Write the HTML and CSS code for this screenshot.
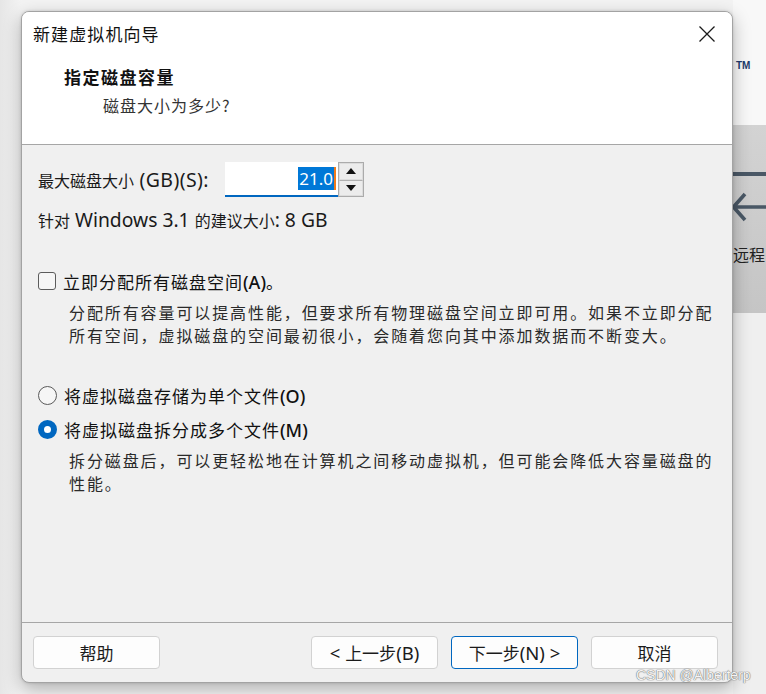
FILE: index.html
```html
<!DOCTYPE html>
<html lang="zh-CN">
<head>
<meta charset="utf-8">
<title>新建虚拟机向导</title>
<link rel="stylesheet" href="styles.css">
</head>
<body>
<div class="desk">
  <div class="window">
    <div class="titlebar">
      <span class="title">新建虚拟机向导</span>
      <svg class="close" width="18" height="18" viewBox="0 0 18 18"><path d="M1.5 1.5 L16.5 16.5 M16.5 1.5 L1.5 16.5" stroke="#1a1a1a" stroke-width="1.3" fill="none"/></svg>
    </div>
    <div class="header">
      <div class="h-title">指定磁盘容量</div>
      <div class="h-sub">磁盘大小为多少?</div>
    </div>
    <div class="content">
      <div class="size-row">
        <span class="lbl">最大磁盘大小<span class="en"> (GB)(S):</span></span>
        <div class="spin">
          <div class="field"><span class="sel">21.0</span><span class="caret"></span></div>
          <div class="spin-btns">
            <div class="spin-btn"><svg width="10" height="6" viewBox="0 0 10 6"><path d="M0 6 L5 0 L10 6 Z" fill="#111"/></svg></div>
            <div class="spin-btn"><svg width="10" height="6" viewBox="0 0 10 6"><path d="M0 0 L5 6 L10 0 Z" fill="#111"/></svg></div>
          </div>
        </div>
      </div>
      <div class="hint">针对<span class="en"> Windows 3.1 </span>的建议大小<span class="en">: 8 GB</span></div>

      <div class="opt check-row">
        <span class="box"></span>
        <span class="opt-lbl">立即分配所有磁盘空间<span class="en b">(A)</span>。</span>
      </div>
      <p class="desc">分配所有容量可以提高性能，但要求所有物理磁盘空间立即可用。如果不立即分配所有空间，虚拟磁盘的空间最初很小，会随着您向其中添加数据而不断变大。</p>

      <div class="opt radio-row first">
        <span class="radio"></span>
        <span class="opt-lbl">将虚拟磁盘存储为单个文件<span class="en b">(O)</span></span>
      </div>
      <div class="opt radio-row">
        <span class="radio on"></span>
        <span class="opt-lbl">将虚拟磁盘拆分成多个文件<span class="en b">(M)</span></span>
      </div>
      <p class="desc">拆分磁盘后，可以更轻松地在计算机之间移动虚拟机，但可能会降低大容量磁盘的性能。</p>
    </div>
    <div class="footer">
      <button class="btn">帮助</button>
      <div class="btn-group">
        <button class="btn"><span class="en">&lt;&nbsp;</span>上一步<span class="en">(B)</span></button>
        <button class="btn primary">下一步<span class="en">(N)&nbsp;&gt;</span></button>
        <button class="btn">取消</button>
      </div>
    </div>
  </div>
  <div class="side">
    <div class="side-top"><span class="tm">TM</span></div>
    <div class="side-panel">
      <div class="side-bar"></div>
      <svg class="side-arrow" width="34" height="30" viewBox="0 0 34 30"><path d="M13 2 L1.5 15 L13 28 M1.5 15 H34" stroke="#4a5866" stroke-width="3.6" fill="none"/></svg>
      <span class="side-text">远程</span>
    </div>
    <div class="side-bottom"></div>
  </div>
</div>
<div class="watermark">CSDN @Alberterp</div>
</body>
</html>
```

FILE: styles.css
```css
* { box-sizing: border-box; }
html, body { margin: 0; padding: 0; }
body {
  width: 766px;
  height: 694px;
  overflow: hidden;
  position: relative;
  background: #ededed;
  font-family: "Noto Sans CJK SC", "Noto Sans", sans-serif;
  color: #1a1a1a;
}
.en { font-family: "Noto Sans", "Noto Sans CJK SC", sans-serif; }
.b { font-weight: 500; }

.desk {
  display: flex;
  height: 694px;
  padding-left: 21px;
  background: linear-gradient(90deg, #e6e6e6 0, #f3f3f3 21px);
}

.window {
  position: relative;
  z-index: 1;
  width: 712px;
  height: 672px;
  margin-top: 11px;
  border: 1px solid #a3a3a3;
  border-radius: 8px;
  background: #f0f0f0;
  box-shadow: 0 6px 18px rgba(0,0,0,0.28), 0 0 3px rgba(0,0,0,0.15);
  display: flex;
  flex-direction: column;
  overflow: hidden;
  flex: none;
}

.titlebar {
  height: 43px;
  background: #fff;
  display: flex;
  align-items: center;
  justify-content: space-between;
  padding: 0 16px 0 11px;
}
.title { font-size: 17px; color: #111; letter-spacing: 1.1px; }
.close { display: block; margin-top: 1px; }

.header {
  height: 90px;
  background: #fff;
  border-bottom: 1px solid #a6a6a6;
  padding-top: 8px;
}
.h-title {
  padding-left: 42px;
  font-size: 17px;
  font-weight: 700;
  letter-spacing: 1.5px;
  line-height: 28px;
  color: #111;
}
.h-sub {
  padding-left: 81px;
  font-size: 16px;
  letter-spacing: 1px;
  line-height: 28px;
  color: #333;
}

.content {
  flex: 1;
  padding: 17px 0 0 16px;
}

.size-row {
  display: flex;
  align-items: center;
  height: 35px;
}
.lbl { font-size: 16px; width: 187px; flex: none; color: #1a1a1a; white-space: nowrap; }
.lbl .en { font-size: 19.5px; letter-spacing: 0.4px; }

.spin { display: flex; height: 35px; }
.field {
  width: 113px;
  height: 35px;
  background: #fff;
  border-bottom: 2px solid #0067c0;
  display: flex;
  align-items: center;
  justify-content: flex-end;
  padding-right: 2px;
}
.sel {
  font-family: "Noto Sans", sans-serif;
  font-size: 17px;
  line-height: 23px;
  background: #0078d7;
  color: #fff;
  padding: 0 1px;
}
.caret { width: 2px; height: 23px; background: #f07a1a; }
.spin-btns {
  width: 26px;
  height: 35px;
  border: 1px solid #ababab;
  display: flex;
  flex-direction: column;
  background: #f0f0f0;
}
.spin-btn {
  flex: 1;
  display: flex;
  align-items: center;
  justify-content: center;
  border: 1px solid #dcdcdc;
  background: #ececec;
}
.spin-btn + .spin-btn { border-top: 1px solid #b0b0b0; }

.hint {
  margin-top: 9px;
  font-size: 16px;
  line-height: 28px;
  color: #1a1a1a;
  white-space: nowrap;
}
.hint .en { font-size: 19.3px; }

.opt {
  display: flex;
  align-items: center;
  height: 28px;
}
.check-row { margin-top: 33px; }
.opt-lbl { font-size: 17px; color: #111; margin-left: 7px; letter-spacing: 1px; white-space: nowrap; }
.opt-lbl .en { font-size: 18px; letter-spacing: 0; }

.box {
  width: 18px;
  height: 18px;
  border: 1px solid #5c5c5c;
  border-radius: 3px;
  background: #f6f6f6;
  flex: none;
}

.desc {
  margin: 6px 0 0 0;
  padding-left: 31px;
  width: 682px;
  font-size: 16px;
  letter-spacing: 1.9px;
  line-height: 23px;
  color: #2a2a2a;
}

.radio-row { height: 34px; }
.radio-row.first { margin-top: 31px; }
.radio {
  width: 19px;
  height: 19px;
  border-radius: 50%;
  border: 1px solid #5a5a5a;
  background: #f6f6f6;
  flex: none;
}
.radio.on {
  border: 6px solid #0067c0;
  background: #fff;
}
.radio-row + .desc { margin-top: 3px; }

.footer {
  height: 60px;
  border-top: 1px solid #a6a6a6;
  display: flex;
  justify-content: space-between;
  align-items: flex-start;
  padding: 13px 14px 0 11px;
}
.btn-group { display: flex; gap: 13px; }
.btn {
  width: 127px;
  height: 33px;
  border: 1px solid #d2d2d2;
  border-radius: 4px;
  background: #fdfdfd;
  font-family: "Noto Sans CJK SC", sans-serif;
  font-size: 17px;
  color: #1b1b1b;
  padding: 0;
  display: flex;
  align-items: center;
  justify-content: center;
  white-space: nowrap;
}
.btn .en { font-size: 18.5px; }
.btn.primary { border-color: #0067c0; }

.side {
  flex: 1;
  display: flex;
  flex-direction: column;
  overflow: hidden;
}
.side-top {
  height: 125px;
  background: #f8f8f8;
  padding-top: 60px;
}
.tm {
  display: block;
  font-family: "Liberation Sans", sans-serif;
  font-weight: 700;
  font-size: 10px;
  color: #213a6b;
  margin-left: 3px;
}
.side-panel {
  height: 188px;
  background: linear-gradient(#d3d3d3, #c5c5c5);
  display: flex;
  flex-direction: column;
}
.side-bar {
  height: 4px;
  margin-top: 47px;
  background: #4a5866;
}
.side-arrow { display: block; margin-top: 16px; margin-left: -1px; }
.side-text {
  margin-top: 21px;
  font-size: 16px;
  line-height: 22px;
  color: #222;
  white-space: nowrap;
}
.side-bottom { flex: 1; background: #efefef; }

.watermark {
  position: absolute;
  z-index: 2;
  left: 636px;
  top: 667px;
  font-family: "Liberation Sans", sans-serif;
  font-size: 14px;
  color: #f4f4f4;
  text-shadow: 0 0 1px #666, 0 0 1px #666;
  white-space: nowrap;
}
```
